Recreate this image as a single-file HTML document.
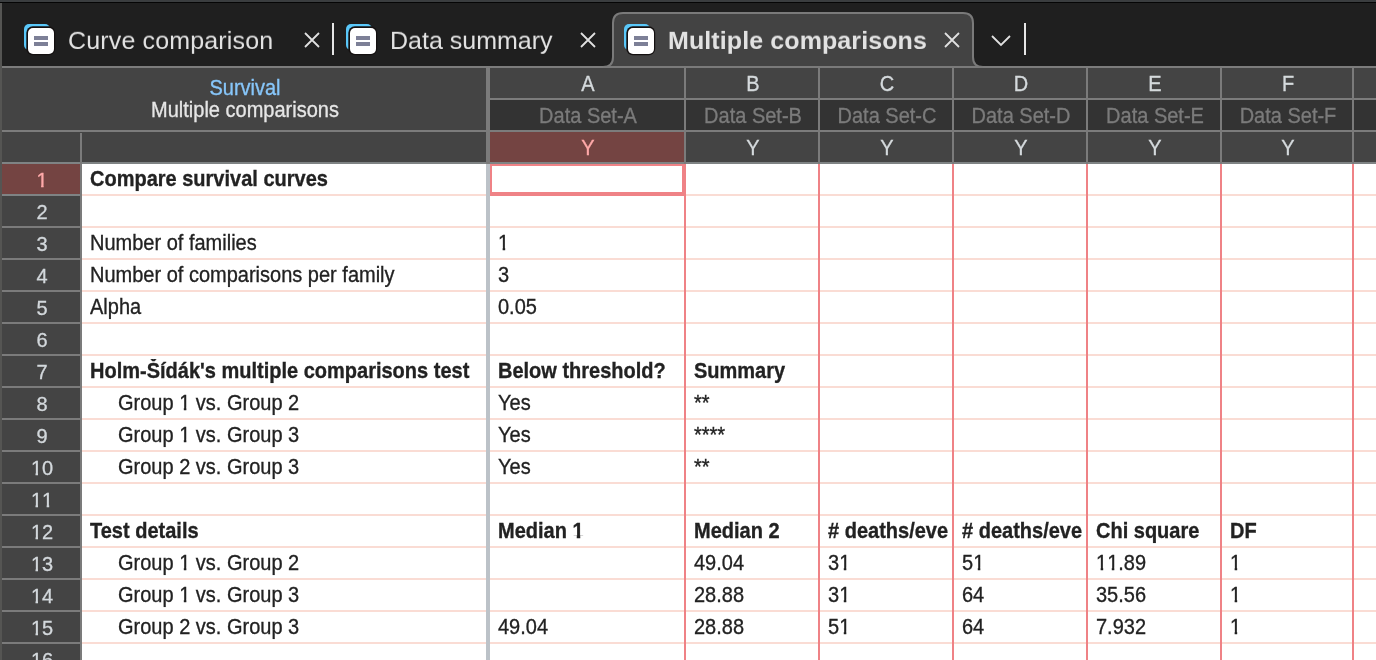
<!DOCTYPE html>
<html><head><meta charset="utf-8"><style>
html,body{margin:0;padding:0;}
body{width:1376px;height:660px;overflow:hidden;position:relative;background:#fff;font-family:"Liberation Sans",sans-serif;}
.r{position:absolute;}
.one{display:inline-block;clip-path:polygon(-0.2em -0.2em,0.8em -0.2em,0.8em 0.80em,0.358em 0.80em,0.358em 1.3em,0.234em 1.3em,0.234em 0.80em,-0.2em 0.80em);}
.b .one{clip-path:polygon(-0.2em -0.2em,0.8em -0.2em,0.8em 0.77em,0.388em 0.77em,0.388em 1.3em,0.216em 1.3em,0.216em 0.77em,-0.2em 0.77em);}
.t{position:absolute;white-space:pre;line-height:normal;will-change:transform;}
</style></head><body>
<div class="r" style="left:0px;top:0px;width:1376px;height:660px;background:#ffffff;"></div>
<div class="r" style="left:0px;top:0px;width:1376px;height:66px;background:#1f1f1f;"></div>
<div class="r" style="left:0px;top:0px;width:1376px;height:2px;background:#3a3d3f;"></div>
<div class="r" style="left:0px;top:2px;width:1376px;height:1px;background:#050505;"></div>
<div class="r" style="left:0px;top:68px;width:1376px;height:96px;background:#444444;"></div>
<div class="r" style="left:490px;top:100px;width:886px;height:30px;background:#333333;"></div>
<div class="r" style="left:490px;top:132px;width:194px;height:30px;background:#744442;"></div>
<div class="r" style="left:2px;top:164px;width:78px;height:30px;background:#744442;"></div>
<div class="r" style="left:2px;top:196px;width:78px;height:30px;background:#444444;"></div>
<div class="r" style="left:2px;top:228px;width:78px;height:30px;background:#444444;"></div>
<div class="r" style="left:2px;top:260px;width:78px;height:30px;background:#444444;"></div>
<div class="r" style="left:2px;top:292px;width:78px;height:30px;background:#444444;"></div>
<div class="r" style="left:2px;top:324px;width:78px;height:30px;background:#444444;"></div>
<div class="r" style="left:2px;top:356px;width:78px;height:30px;background:#444444;"></div>
<div class="r" style="left:2px;top:388px;width:78px;height:30px;background:#444444;"></div>
<div class="r" style="left:2px;top:420px;width:78px;height:30px;background:#444444;"></div>
<div class="r" style="left:2px;top:452px;width:78px;height:30px;background:#444444;"></div>
<div class="r" style="left:2px;top:484px;width:78px;height:30px;background:#444444;"></div>
<div class="r" style="left:2px;top:516px;width:78px;height:30px;background:#444444;"></div>
<div class="r" style="left:2px;top:548px;width:78px;height:30px;background:#444444;"></div>
<div class="r" style="left:2px;top:580px;width:78px;height:30px;background:#444444;"></div>
<div class="r" style="left:2px;top:612px;width:78px;height:30px;background:#444444;"></div>
<div class="r" style="left:2px;top:644px;width:78px;height:30px;background:#444444;"></div>
<div class="r" style="left:0px;top:66px;width:1376px;height:2px;background:#7c7c7c;"></div>
<div class="r" style="left:490px;top:98px;width:886px;height:2px;background:#7c7c7c;"></div>
<div class="r" style="left:0px;top:130px;width:1376px;height:2px;background:#7c7c7c;"></div>
<div class="r" style="left:0px;top:162px;width:1376px;height:2px;background:#7f8384;"></div>
<div class="r" style="left:486px;top:68px;width:4px;height:96px;background:#7b7b7b;"></div>
<div class="r" style="left:684px;top:68px;width:2px;height:96px;background:#7b7b7b;"></div>
<div class="r" style="left:818px;top:68px;width:2px;height:96px;background:#7b7b7b;"></div>
<div class="r" style="left:952px;top:68px;width:2px;height:96px;background:#7b7b7b;"></div>
<div class="r" style="left:1086px;top:68px;width:2px;height:96px;background:#7b7b7b;"></div>
<div class="r" style="left:1220px;top:68px;width:2px;height:96px;background:#7b7b7b;"></div>
<div class="r" style="left:1352px;top:68px;width:2px;height:96px;background:#7b7b7b;"></div>
<div class="r" style="left:80px;top:133px;width:2px;height:31px;background:#7b7b7b;"></div>
<div class="r" style="left:2px;top:194px;width:78px;height:2px;background:#7f8384;"></div>
<div class="r" style="left:82px;top:194px;width:404px;height:2px;background:#fadcd4;"></div>
<div class="r" style="left:490px;top:194px;width:886px;height:2px;background:#fadcd4;"></div>
<div class="r" style="left:2px;top:226px;width:78px;height:2px;background:#7b7b7b;"></div>
<div class="r" style="left:82px;top:226px;width:404px;height:2px;background:#fadcd4;"></div>
<div class="r" style="left:490px;top:226px;width:886px;height:2px;background:#fadcd4;"></div>
<div class="r" style="left:2px;top:258px;width:78px;height:2px;background:#7b7b7b;"></div>
<div class="r" style="left:82px;top:258px;width:404px;height:2px;background:#fadcd4;"></div>
<div class="r" style="left:490px;top:258px;width:886px;height:2px;background:#fadcd4;"></div>
<div class="r" style="left:2px;top:290px;width:78px;height:2px;background:#7b7b7b;"></div>
<div class="r" style="left:82px;top:290px;width:404px;height:2px;background:#fadcd4;"></div>
<div class="r" style="left:490px;top:290px;width:886px;height:2px;background:#fadcd4;"></div>
<div class="r" style="left:2px;top:322px;width:78px;height:2px;background:#7b7b7b;"></div>
<div class="r" style="left:82px;top:322px;width:404px;height:2px;background:#fadcd4;"></div>
<div class="r" style="left:490px;top:322px;width:886px;height:2px;background:#fadcd4;"></div>
<div class="r" style="left:2px;top:354px;width:78px;height:2px;background:#7b7b7b;"></div>
<div class="r" style="left:82px;top:354px;width:404px;height:2px;background:#fadcd4;"></div>
<div class="r" style="left:490px;top:354px;width:886px;height:2px;background:#fadcd4;"></div>
<div class="r" style="left:2px;top:386px;width:78px;height:2px;background:#7b7b7b;"></div>
<div class="r" style="left:82px;top:386px;width:404px;height:2px;background:#fadcd4;"></div>
<div class="r" style="left:490px;top:386px;width:886px;height:2px;background:#fadcd4;"></div>
<div class="r" style="left:2px;top:418px;width:78px;height:2px;background:#7b7b7b;"></div>
<div class="r" style="left:82px;top:418px;width:404px;height:2px;background:#fadcd4;"></div>
<div class="r" style="left:490px;top:418px;width:886px;height:2px;background:#fadcd4;"></div>
<div class="r" style="left:2px;top:450px;width:78px;height:2px;background:#7b7b7b;"></div>
<div class="r" style="left:82px;top:450px;width:404px;height:2px;background:#fadcd4;"></div>
<div class="r" style="left:490px;top:450px;width:886px;height:2px;background:#fadcd4;"></div>
<div class="r" style="left:2px;top:482px;width:78px;height:2px;background:#7b7b7b;"></div>
<div class="r" style="left:82px;top:482px;width:404px;height:2px;background:#fadcd4;"></div>
<div class="r" style="left:490px;top:482px;width:886px;height:2px;background:#fadcd4;"></div>
<div class="r" style="left:2px;top:514px;width:78px;height:2px;background:#7b7b7b;"></div>
<div class="r" style="left:82px;top:514px;width:404px;height:2px;background:#fadcd4;"></div>
<div class="r" style="left:490px;top:514px;width:886px;height:2px;background:#fadcd4;"></div>
<div class="r" style="left:2px;top:546px;width:78px;height:2px;background:#7b7b7b;"></div>
<div class="r" style="left:82px;top:546px;width:404px;height:2px;background:#fadcd4;"></div>
<div class="r" style="left:490px;top:546px;width:886px;height:2px;background:#fadcd4;"></div>
<div class="r" style="left:2px;top:578px;width:78px;height:2px;background:#7b7b7b;"></div>
<div class="r" style="left:82px;top:578px;width:404px;height:2px;background:#fadcd4;"></div>
<div class="r" style="left:490px;top:578px;width:886px;height:2px;background:#fadcd4;"></div>
<div class="r" style="left:2px;top:610px;width:78px;height:2px;background:#7b7b7b;"></div>
<div class="r" style="left:82px;top:610px;width:404px;height:2px;background:#fadcd4;"></div>
<div class="r" style="left:490px;top:610px;width:886px;height:2px;background:#fadcd4;"></div>
<div class="r" style="left:2px;top:642px;width:78px;height:2px;background:#7b7b7b;"></div>
<div class="r" style="left:82px;top:642px;width:404px;height:2px;background:#fadcd4;"></div>
<div class="r" style="left:490px;top:642px;width:886px;height:2px;background:#fadcd4;"></div>
<div class="r" style="left:2px;top:674px;width:78px;height:2px;background:#7b7b7b;"></div>
<div class="r" style="left:82px;top:674px;width:404px;height:2px;background:#fadcd4;"></div>
<div class="r" style="left:490px;top:674px;width:886px;height:2px;background:#fadcd4;"></div>
<div class="r" style="left:80px;top:164px;width:2px;height:496px;background:#7b7b7b;"></div>
<div class="r" style="left:486px;top:164px;width:4px;height:496px;background:#bcc2c8;"></div>
<div class="r" style="left:684px;top:164px;width:2px;height:496px;background:#ef8286;"></div>
<div class="r" style="left:818px;top:164px;width:2px;height:496px;background:#ef8286;"></div>
<div class="r" style="left:952px;top:164px;width:2px;height:496px;background:#ef8286;"></div>
<div class="r" style="left:1086px;top:164px;width:2px;height:496px;background:#ef8286;"></div>
<div class="r" style="left:1220px;top:164px;width:2px;height:496px;background:#ef8286;"></div>
<div class="r" style="left:1352px;top:164px;width:2px;height:496px;background:#ef8286;"></div>
<div class="r" style="left:490px;top:164px;width:194px;height:30px;box-sizing:border-box;border:2px solid #ef8286;"></div>
<div class="r" style="left:490px;top:194px;width:196px;height:2px;background:#ef8286;"></div>
<div class="r" style="left:0px;top:3px;width:2px;height:657px;background:#555553;"></div>
<div class="t" style="left:-55px;width:600px;text-align:center;top:76.60px;font-size:20px;color:#87c6fa;font-weight:normal;transform:scaleY(1.06);transform-origin:0 18.10px;-webkit-text-stroke:0.3px currentColor;">Survival</div>
<div class="t" style="left:-55px;width:600px;text-align:center;top:98.50px;font-size:20px;color:#e6e6e6;font-weight:normal;transform:scaleY(1.06);transform-origin:0 18.10px;-webkit-text-stroke:0.3px currentColor;">Multiple comparisons</div>
<div class="t" style="left:287.5px;width:600px;text-align:center;top:72.90px;font-size:20px;color:#d5dadd;font-weight:normal;transform:scaleY(1.06);transform-origin:0 18.10px;-webkit-text-stroke:0.3px currentColor;">A</div>
<div class="t" style="left:287.5px;width:600px;text-align:center;top:104.90px;font-size:20px;color:#7b7b7b;font-weight:normal;transform:scaleY(1.06);transform-origin:0 18.10px;-webkit-text-stroke:0.3px currentColor;">Data Set-A</div>
<div class="t" style="left:287.5px;width:600px;text-align:center;top:136.90px;font-size:20px;color:#ffa9a9;font-weight:normal;transform:scaleY(1.06);transform-origin:0 18.10px;-webkit-text-stroke:0.3px currentColor;">Y</div>
<div class="t" style="left:452.5px;width:600px;text-align:center;top:72.90px;font-size:20px;color:#d5dadd;font-weight:normal;transform:scaleY(1.06);transform-origin:0 18.10px;-webkit-text-stroke:0.3px currentColor;">B</div>
<div class="t" style="left:452.5px;width:600px;text-align:center;top:104.90px;font-size:20px;color:#7b7b7b;font-weight:normal;transform:scaleY(1.06);transform-origin:0 18.10px;-webkit-text-stroke:0.3px currentColor;">Data Set-B</div>
<div class="t" style="left:452.5px;width:600px;text-align:center;top:136.90px;font-size:20px;color:#d5dadd;font-weight:normal;transform:scaleY(1.06);transform-origin:0 18.10px;-webkit-text-stroke:0.3px currentColor;">Y</div>
<div class="t" style="left:586.5px;width:600px;text-align:center;top:72.90px;font-size:20px;color:#d5dadd;font-weight:normal;transform:scaleY(1.06);transform-origin:0 18.10px;-webkit-text-stroke:0.3px currentColor;">C</div>
<div class="t" style="left:586.5px;width:600px;text-align:center;top:104.90px;font-size:20px;color:#7b7b7b;font-weight:normal;transform:scaleY(1.06);transform-origin:0 18.10px;-webkit-text-stroke:0.3px currentColor;">Data Set-C</div>
<div class="t" style="left:586.5px;width:600px;text-align:center;top:136.90px;font-size:20px;color:#d5dadd;font-weight:normal;transform:scaleY(1.06);transform-origin:0 18.10px;-webkit-text-stroke:0.3px currentColor;">Y</div>
<div class="t" style="left:720.5px;width:600px;text-align:center;top:72.90px;font-size:20px;color:#d5dadd;font-weight:normal;transform:scaleY(1.06);transform-origin:0 18.10px;-webkit-text-stroke:0.3px currentColor;">D</div>
<div class="t" style="left:720.5px;width:600px;text-align:center;top:104.90px;font-size:20px;color:#7b7b7b;font-weight:normal;transform:scaleY(1.06);transform-origin:0 18.10px;-webkit-text-stroke:0.3px currentColor;">Data Set-D</div>
<div class="t" style="left:720.5px;width:600px;text-align:center;top:136.90px;font-size:20px;color:#d5dadd;font-weight:normal;transform:scaleY(1.06);transform-origin:0 18.10px;-webkit-text-stroke:0.3px currentColor;">Y</div>
<div class="t" style="left:854.5px;width:600px;text-align:center;top:72.90px;font-size:20px;color:#d5dadd;font-weight:normal;transform:scaleY(1.06);transform-origin:0 18.10px;-webkit-text-stroke:0.3px currentColor;">E</div>
<div class="t" style="left:854.5px;width:600px;text-align:center;top:104.90px;font-size:20px;color:#7b7b7b;font-weight:normal;transform:scaleY(1.06);transform-origin:0 18.10px;-webkit-text-stroke:0.3px currentColor;">Data Set-E</div>
<div class="t" style="left:854.5px;width:600px;text-align:center;top:136.90px;font-size:20px;color:#d5dadd;font-weight:normal;transform:scaleY(1.06);transform-origin:0 18.10px;-webkit-text-stroke:0.3px currentColor;">Y</div>
<div class="t" style="left:987.5px;width:600px;text-align:center;top:72.90px;font-size:20px;color:#d5dadd;font-weight:normal;transform:scaleY(1.06);transform-origin:0 18.10px;-webkit-text-stroke:0.3px currentColor;">F</div>
<div class="t" style="left:987.5px;width:600px;text-align:center;top:104.90px;font-size:20px;color:#7b7b7b;font-weight:normal;transform:scaleY(1.06);transform-origin:0 18.10px;-webkit-text-stroke:0.3px currentColor;">Data Set-F</div>
<div class="t" style="left:987.5px;width:600px;text-align:center;top:136.90px;font-size:20px;color:#d5dadd;font-weight:normal;transform:scaleY(1.06);transform-origin:0 18.10px;-webkit-text-stroke:0.3px currentColor;">Y</div>
<div class="t" style="left:-258.5px;width:600px;text-align:center;top:168.90px;font-size:20px;color:#ffa9a9;font-weight:normal;transform:scaleY(1.02);transform-origin:0 18.10px;-webkit-text-stroke:0.3px currentColor;"><span class="one">1</span></div>
<div class="t" style="left:-258.5px;width:600px;text-align:center;top:200.90px;font-size:20px;color:#d3d8dc;font-weight:normal;transform:scaleY(1.02);transform-origin:0 18.10px;-webkit-text-stroke:0.3px currentColor;">2</div>
<div class="t" style="left:-258.5px;width:600px;text-align:center;top:232.90px;font-size:20px;color:#d3d8dc;font-weight:normal;transform:scaleY(1.02);transform-origin:0 18.10px;-webkit-text-stroke:0.3px currentColor;">3</div>
<div class="t" style="left:-258.5px;width:600px;text-align:center;top:264.90px;font-size:20px;color:#d3d8dc;font-weight:normal;transform:scaleY(1.02);transform-origin:0 18.10px;-webkit-text-stroke:0.3px currentColor;">4</div>
<div class="t" style="left:-258.5px;width:600px;text-align:center;top:296.90px;font-size:20px;color:#d3d8dc;font-weight:normal;transform:scaleY(1.02);transform-origin:0 18.10px;-webkit-text-stroke:0.3px currentColor;">5</div>
<div class="t" style="left:-258.5px;width:600px;text-align:center;top:328.90px;font-size:20px;color:#d3d8dc;font-weight:normal;transform:scaleY(1.02);transform-origin:0 18.10px;-webkit-text-stroke:0.3px currentColor;">6</div>
<div class="t" style="left:-258.5px;width:600px;text-align:center;top:360.90px;font-size:20px;color:#d3d8dc;font-weight:normal;transform:scaleY(1.02);transform-origin:0 18.10px;-webkit-text-stroke:0.3px currentColor;">7</div>
<div class="t" style="left:-258.5px;width:600px;text-align:center;top:392.90px;font-size:20px;color:#d3d8dc;font-weight:normal;transform:scaleY(1.02);transform-origin:0 18.10px;-webkit-text-stroke:0.3px currentColor;">8</div>
<div class="t" style="left:-258.5px;width:600px;text-align:center;top:424.90px;font-size:20px;color:#d3d8dc;font-weight:normal;transform:scaleY(1.02);transform-origin:0 18.10px;-webkit-text-stroke:0.3px currentColor;">9</div>
<div class="t" style="left:-258.5px;width:600px;text-align:center;top:456.90px;font-size:20px;color:#d3d8dc;font-weight:normal;transform:scaleY(1.02);transform-origin:0 18.10px;-webkit-text-stroke:0.3px currentColor;"><span class="one">1</span>0</div>
<div class="t" style="left:-258.5px;width:600px;text-align:center;top:488.90px;font-size:20px;color:#d3d8dc;font-weight:normal;transform:scaleY(1.02);transform-origin:0 18.10px;-webkit-text-stroke:0.3px currentColor;"><span class="one">1</span><span class="one">1</span></div>
<div class="t" style="left:-258.5px;width:600px;text-align:center;top:520.90px;font-size:20px;color:#d3d8dc;font-weight:normal;transform:scaleY(1.02);transform-origin:0 18.10px;-webkit-text-stroke:0.3px currentColor;"><span class="one">1</span>2</div>
<div class="t" style="left:-258.5px;width:600px;text-align:center;top:552.90px;font-size:20px;color:#d3d8dc;font-weight:normal;transform:scaleY(1.02);transform-origin:0 18.10px;-webkit-text-stroke:0.3px currentColor;"><span class="one">1</span>3</div>
<div class="t" style="left:-258.5px;width:600px;text-align:center;top:584.90px;font-size:20px;color:#d3d8dc;font-weight:normal;transform:scaleY(1.02);transform-origin:0 18.10px;-webkit-text-stroke:0.3px currentColor;"><span class="one">1</span>4</div>
<div class="t" style="left:-258.5px;width:600px;text-align:center;top:616.90px;font-size:20px;color:#d3d8dc;font-weight:normal;transform:scaleY(1.02);transform-origin:0 18.10px;-webkit-text-stroke:0.3px currentColor;"><span class="one">1</span>5</div>
<div class="t" style="left:-258.5px;width:600px;text-align:center;top:648.90px;font-size:20px;color:#d3d8dc;font-weight:normal;transform:scaleY(1.02);transform-origin:0 18.10px;-webkit-text-stroke:0.3px currentColor;"><span class="one">1</span>6</div>
<div class="t b" style="left:90px;top:167.90px;font-size:20px;color:#222;font-weight:bold;width:396px;overflow:hidden;transform:scaleY(1.06);transform-origin:0 18.10px;-webkit-text-stroke:0.3px currentColor;">Compare survival curves</div>
<div class="t" style="left:90px;top:231.90px;font-size:20px;color:#222;font-weight:normal;width:396px;overflow:hidden;transform:scaleY(1.06);transform-origin:0 18.10px;-webkit-text-stroke:0.3px currentColor;">Number of families</div>
<div class="t" style="left:498px;top:231.90px;font-size:20px;color:#222;font-weight:normal;width:186px;overflow:hidden;transform:scaleY(1.06);transform-origin:0 18.10px;-webkit-text-stroke:0.3px currentColor;"><span class="one">1</span></div>
<div class="t" style="left:90px;top:263.90px;font-size:20px;color:#222;font-weight:normal;width:396px;overflow:hidden;transform:scaleY(1.06);transform-origin:0 18.10px;-webkit-text-stroke:0.3px currentColor;">Number of comparisons per family</div>
<div class="t" style="left:498px;top:263.90px;font-size:20px;color:#222;font-weight:normal;width:186px;overflow:hidden;transform:scaleY(1.06);transform-origin:0 18.10px;-webkit-text-stroke:0.3px currentColor;">3</div>
<div class="t" style="left:90px;top:295.90px;font-size:20px;color:#222;font-weight:normal;width:396px;overflow:hidden;transform:scaleY(1.06);transform-origin:0 18.10px;-webkit-text-stroke:0.3px currentColor;">Alpha</div>
<div class="t" style="left:498px;top:295.90px;font-size:20px;color:#222;font-weight:normal;width:186px;overflow:hidden;transform:scaleY(1.06);transform-origin:0 18.10px;-webkit-text-stroke:0.3px currentColor;">0.05</div>
<div class="t b" style="left:90px;top:359.90px;font-size:20px;color:#222;font-weight:bold;width:396px;overflow:hidden;transform:scaleY(1.06);transform-origin:0 18.10px;-webkit-text-stroke:0.3px currentColor;">Holm-Šídák's multiple comparisons test</div>
<div class="t b" style="left:498px;top:359.90px;font-size:20px;color:#222;font-weight:bold;width:186px;overflow:hidden;transform:scaleY(1.06);transform-origin:0 18.10px;-webkit-text-stroke:0.3px currentColor;">Below threshold?</div>
<div class="t b" style="left:694px;top:359.90px;font-size:20px;color:#222;font-weight:bold;width:124px;overflow:hidden;transform:scaleY(1.06);transform-origin:0 18.10px;-webkit-text-stroke:0.3px currentColor;">Summary</div>
<div class="t" style="left:118px;top:391.90px;font-size:20px;color:#222;font-weight:normal;width:396px;overflow:hidden;transform:scaleY(1.06);transform-origin:0 18.10px;-webkit-text-stroke:0.3px currentColor;">Group <span class="one">1</span> vs. Group 2</div>
<div class="t" style="left:498px;top:391.90px;font-size:20px;color:#222;font-weight:normal;width:186px;overflow:hidden;transform:scaleY(1.06);transform-origin:0 18.10px;-webkit-text-stroke:0.3px currentColor;">Yes</div>
<div class="t" style="left:694px;top:391.90px;font-size:20px;color:#222;font-weight:normal;width:124px;overflow:hidden;transform:scaleY(1.06);transform-origin:0 18.10px;-webkit-text-stroke:0.3px currentColor;">**</div>
<div class="t" style="left:118px;top:423.90px;font-size:20px;color:#222;font-weight:normal;width:396px;overflow:hidden;transform:scaleY(1.06);transform-origin:0 18.10px;-webkit-text-stroke:0.3px currentColor;">Group <span class="one">1</span> vs. Group 3</div>
<div class="t" style="left:498px;top:423.90px;font-size:20px;color:#222;font-weight:normal;width:186px;overflow:hidden;transform:scaleY(1.06);transform-origin:0 18.10px;-webkit-text-stroke:0.3px currentColor;">Yes</div>
<div class="t" style="left:694px;top:423.90px;font-size:20px;color:#222;font-weight:normal;width:124px;overflow:hidden;transform:scaleY(1.06);transform-origin:0 18.10px;-webkit-text-stroke:0.3px currentColor;">****</div>
<div class="t" style="left:118px;top:455.90px;font-size:20px;color:#222;font-weight:normal;width:396px;overflow:hidden;transform:scaleY(1.06);transform-origin:0 18.10px;-webkit-text-stroke:0.3px currentColor;">Group 2 vs. Group 3</div>
<div class="t" style="left:498px;top:455.90px;font-size:20px;color:#222;font-weight:normal;width:186px;overflow:hidden;transform:scaleY(1.06);transform-origin:0 18.10px;-webkit-text-stroke:0.3px currentColor;">Yes</div>
<div class="t" style="left:694px;top:455.90px;font-size:20px;color:#222;font-weight:normal;width:124px;overflow:hidden;transform:scaleY(1.06);transform-origin:0 18.10px;-webkit-text-stroke:0.3px currentColor;">**</div>
<div class="t b" style="left:90px;top:519.90px;font-size:20px;color:#222;font-weight:bold;width:396px;overflow:hidden;transform:scaleY(1.06);transform-origin:0 18.10px;-webkit-text-stroke:0.3px currentColor;">Test details</div>
<div class="t b" style="left:498px;top:519.90px;font-size:20px;color:#222;font-weight:bold;width:186px;overflow:hidden;transform:scaleY(1.06);transform-origin:0 18.10px;-webkit-text-stroke:0.3px currentColor;">Median <span class="one">1</span></div>
<div class="t b" style="left:694px;top:519.90px;font-size:20px;color:#222;font-weight:bold;width:124px;overflow:hidden;transform:scaleY(1.06);transform-origin:0 18.10px;-webkit-text-stroke:0.3px currentColor;">Median 2</div>
<div class="t b" style="left:828px;top:519.90px;font-size:20px;color:#222;font-weight:bold;width:124px;overflow:hidden;transform:scaleY(1.06);transform-origin:0 18.10px;-webkit-text-stroke:0.3px currentColor;"># deaths/eve</div>
<div class="t b" style="left:962px;top:519.90px;font-size:20px;color:#222;font-weight:bold;width:124px;overflow:hidden;transform:scaleY(1.06);transform-origin:0 18.10px;-webkit-text-stroke:0.3px currentColor;"># deaths/eve</div>
<div class="t b" style="left:1096px;top:519.90px;font-size:20px;color:#222;font-weight:bold;width:124px;overflow:hidden;transform:scaleY(1.06);transform-origin:0 18.10px;-webkit-text-stroke:0.3px currentColor;">Chi square</div>
<div class="t b" style="left:1230px;top:519.90px;font-size:20px;color:#222;font-weight:bold;width:122px;overflow:hidden;transform:scaleY(1.06);transform-origin:0 18.10px;-webkit-text-stroke:0.3px currentColor;">DF</div>
<div class="t" style="left:118px;top:551.90px;font-size:20px;color:#222;font-weight:normal;width:396px;overflow:hidden;transform:scaleY(1.06);transform-origin:0 18.10px;-webkit-text-stroke:0.3px currentColor;">Group <span class="one">1</span> vs. Group 2</div>
<div class="t" style="left:694px;top:551.90px;font-size:20px;color:#222;font-weight:normal;width:124px;overflow:hidden;transform:scaleY(1.06);transform-origin:0 18.10px;-webkit-text-stroke:0.3px currentColor;">49.04</div>
<div class="t" style="left:828px;top:551.90px;font-size:20px;color:#222;font-weight:normal;width:124px;overflow:hidden;transform:scaleY(1.06);transform-origin:0 18.10px;-webkit-text-stroke:0.3px currentColor;">3<span class="one">1</span></div>
<div class="t" style="left:962px;top:551.90px;font-size:20px;color:#222;font-weight:normal;width:124px;overflow:hidden;transform:scaleY(1.06);transform-origin:0 18.10px;-webkit-text-stroke:0.3px currentColor;">5<span class="one">1</span></div>
<div class="t" style="left:1096px;top:551.90px;font-size:20px;color:#222;font-weight:normal;width:124px;overflow:hidden;transform:scaleY(1.06);transform-origin:0 18.10px;-webkit-text-stroke:0.3px currentColor;"><span class="one">1</span><span class="one">1</span>.89</div>
<div class="t" style="left:1230px;top:551.90px;font-size:20px;color:#222;font-weight:normal;width:122px;overflow:hidden;transform:scaleY(1.06);transform-origin:0 18.10px;-webkit-text-stroke:0.3px currentColor;"><span class="one">1</span></div>
<div class="t" style="left:118px;top:583.90px;font-size:20px;color:#222;font-weight:normal;width:396px;overflow:hidden;transform:scaleY(1.06);transform-origin:0 18.10px;-webkit-text-stroke:0.3px currentColor;">Group <span class="one">1</span> vs. Group 3</div>
<div class="t" style="left:694px;top:583.90px;font-size:20px;color:#222;font-weight:normal;width:124px;overflow:hidden;transform:scaleY(1.06);transform-origin:0 18.10px;-webkit-text-stroke:0.3px currentColor;">28.88</div>
<div class="t" style="left:828px;top:583.90px;font-size:20px;color:#222;font-weight:normal;width:124px;overflow:hidden;transform:scaleY(1.06);transform-origin:0 18.10px;-webkit-text-stroke:0.3px currentColor;">3<span class="one">1</span></div>
<div class="t" style="left:962px;top:583.90px;font-size:20px;color:#222;font-weight:normal;width:124px;overflow:hidden;transform:scaleY(1.06);transform-origin:0 18.10px;-webkit-text-stroke:0.3px currentColor;">64</div>
<div class="t" style="left:1096px;top:583.90px;font-size:20px;color:#222;font-weight:normal;width:124px;overflow:hidden;transform:scaleY(1.06);transform-origin:0 18.10px;-webkit-text-stroke:0.3px currentColor;">35.56</div>
<div class="t" style="left:1230px;top:583.90px;font-size:20px;color:#222;font-weight:normal;width:122px;overflow:hidden;transform:scaleY(1.06);transform-origin:0 18.10px;-webkit-text-stroke:0.3px currentColor;"><span class="one">1</span></div>
<div class="t" style="left:118px;top:615.90px;font-size:20px;color:#222;font-weight:normal;width:396px;overflow:hidden;transform:scaleY(1.06);transform-origin:0 18.10px;-webkit-text-stroke:0.3px currentColor;">Group 2 vs. Group 3</div>
<div class="t" style="left:498px;top:615.90px;font-size:20px;color:#222;font-weight:normal;width:186px;overflow:hidden;transform:scaleY(1.06);transform-origin:0 18.10px;-webkit-text-stroke:0.3px currentColor;">49.04</div>
<div class="t" style="left:694px;top:615.90px;font-size:20px;color:#222;font-weight:normal;width:124px;overflow:hidden;transform:scaleY(1.06);transform-origin:0 18.10px;-webkit-text-stroke:0.3px currentColor;">28.88</div>
<div class="t" style="left:828px;top:615.90px;font-size:20px;color:#222;font-weight:normal;width:124px;overflow:hidden;transform:scaleY(1.06);transform-origin:0 18.10px;-webkit-text-stroke:0.3px currentColor;">5<span class="one">1</span></div>
<div class="t" style="left:962px;top:615.90px;font-size:20px;color:#222;font-weight:normal;width:124px;overflow:hidden;transform:scaleY(1.06);transform-origin:0 18.10px;-webkit-text-stroke:0.3px currentColor;">64</div>
<div class="t" style="left:1096px;top:615.90px;font-size:20px;color:#222;font-weight:normal;width:124px;overflow:hidden;transform:scaleY(1.06);transform-origin:0 18.10px;-webkit-text-stroke:0.3px currentColor;">7.932</div>
<div class="t" style="left:1230px;top:615.90px;font-size:20px;color:#222;font-weight:normal;width:122px;overflow:hidden;transform:scaleY(1.06);transform-origin:0 18.10px;-webkit-text-stroke:0.3px currentColor;"><span class="one">1</span></div>
<svg class="r" style="left:0;top:0" width="1376" height="68" viewBox="0 0 1376 68">
<path d="M603 67 Q613 67 613 57 L613 23 Q613 13 623 13 L963 13 Q973 13 973 23 L973 57 Q973 67 983 67 Z" fill="#434343" stroke="#7a7a7a" stroke-width="2"/>
</svg>
<svg class="r" style="left:0px;top:0px" width="60" height="66" viewBox="0 0 60 66">
<rect x="24" y="24" width="26" height="26" rx="5" fill="#5ac8fa"/>
<rect x="26.3" y="26.3" width="28.9" height="28.9" rx="6.5" fill="#141010"/>
<rect x="28" y="28" width="26" height="26" rx="5" fill="#ffffff"/>
<rect x="34" y="36" width="14" height="4" fill="#7d8097"/>
<rect x="34" y="42" width="14" height="4" fill="#7d8097"/>
</svg>
<svg class="r" style="left:322px;top:0px" width="60" height="66" viewBox="0 0 60 66">
<rect x="24" y="24" width="26" height="26" rx="5" fill="#5ac8fa"/>
<rect x="26.3" y="26.3" width="28.9" height="28.9" rx="6.5" fill="#141010"/>
<rect x="28" y="28" width="26" height="26" rx="5" fill="#ffffff"/>
<rect x="34" y="36" width="14" height="4" fill="#7d8097"/>
<rect x="34" y="42" width="14" height="4" fill="#7d8097"/>
</svg>
<svg class="r" style="left:600px;top:0px" width="60" height="66" viewBox="0 0 60 66">
<rect x="24" y="24" width="26" height="26" rx="5" fill="#5ac8fa"/>
<rect x="26.3" y="26.3" width="28.9" height="28.9" rx="6.5" fill="#141010"/>
<rect x="28" y="28" width="26" height="26" rx="5" fill="#ffffff"/>
<rect x="34" y="36" width="14" height="4" fill="#7d8097"/>
<rect x="34" y="42" width="14" height="4" fill="#7d8097"/>
</svg>
<div class="t" style="left:68px;top:25.88px;font-size:25px;color:#e2e2e2;font-weight:normal;letter-spacing:0.15px;transform:scaleY(0.955);transform-origin:0 22.62px;">Curve comparison</div>
<div class="t" style="left:390px;top:25.88px;font-size:25px;color:#e2e2e2;font-weight:normal;transform:scaleY(0.955);transform-origin:0 22.62px;">Data summary</div>
<div class="t b" style="left:668px;top:25.88px;font-size:25px;color:#e2e2e2;font-weight:bold;letter-spacing:0.1px;transform:scaleY(0.955);transform-origin:0 22.62px;">Multiple comparisons</div>
<svg class="r" style="left:304px;top:32px" width="16" height="16" viewBox="0 0 16 16"><path d="M1 1L15 15M15 1L1 15" stroke="#e0e0e0" stroke-width="1.8" stroke-linecap="butt"/></svg>
<svg class="r" style="left:580px;top:32px" width="16" height="16" viewBox="0 0 16 16"><path d="M1 1L15 15M15 1L1 15" stroke="#e0e0e0" stroke-width="1.8" stroke-linecap="butt"/></svg>
<svg class="r" style="left:944px;top:32px" width="16" height="16" viewBox="0 0 16 16"><path d="M1 1L15 15M15 1L1 15" stroke="#e0e0e0" stroke-width="1.8" stroke-linecap="butt"/></svg>
<div class="r" style="left:332px;top:23px;width:2px;height:32px;background:#e6e6e6;"></div>
<div class="r" style="left:1024px;top:23px;width:2px;height:32px;background:#e6e6e6;"></div>
<svg class="r" style="left:990px;top:33px" width="22" height="16" viewBox="0 0 22 16"><path d="M2 3L11 12L20 3" fill="none" stroke="#e0e0e0" stroke-width="1.8"/></svg>
</body></html>
